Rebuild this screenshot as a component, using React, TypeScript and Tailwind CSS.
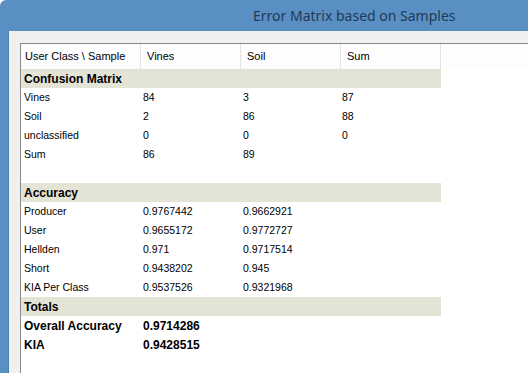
import React from "react";

type Row =
  | { kind: "band"; label: string }
  | { kind: "row"; cells: string[]; bold?: boolean }
  | { kind: "blank" };

const rows: Row[] = [
  { kind: "band", label: "Confusion Matrix" },
  { kind: "row", cells: ["Vines", "84", "3", "87"] },
  { kind: "row", cells: ["Soil", "2", "86", "88"] },
  { kind: "row", cells: ["unclassified", "0", "0", "0"] },
  { kind: "row", cells: ["Sum", "86", "89", ""] },
  { kind: "blank" },
  { kind: "band", label: "Accuracy" },
  { kind: "row", cells: ["Producer", "0.9767442", "0.9662921", ""] },
  { kind: "row", cells: ["User", "0.9655172", "0.9772727", ""] },
  { kind: "row", cells: ["Hellden", "0.971", "0.9717514", ""] },
  { kind: "row", cells: ["Short", "0.9438202", "0.945", ""] },
  { kind: "row", cells: ["KIA Per Class", "0.9537526", "0.9321968", ""] },
  { kind: "band", label: "Totals" },
  { kind: "row", cells: ["Overall Accuracy", "0.9714286", "", ""], bold: true },
  { kind: "row", cells: ["KIA", "0.9428515", "", ""], bold: true },
];

const widths = ["w-[120px]", "w-[100px]", "w-[100px]", "w-[100px]"];

export default function App() {
  return (
    <div
      className="w-[528px] h-[373px] overflow-hidden bg-[#5a8fc3] flex flex-col rounded-tl-[6px]"
      style={{ fontFamily: '"Liberation Sans", Arial, sans-serif' }}
    >
      <div className="h-[31px] shrink-0 flex items-center pl-[253px]">
        <span
          className="text-[14px] text-[#1f3a58] leading-none"
          style={{ fontFamily: '"Noto Sans", "Open Sans", sans-serif' }}
        >
          Error Matrix based on Samples
        </span>
      </div>
      <div className="flex-1 flex pl-[8px] min-h-0">
        <div className="flex-1 bg-[#f0f0f0] pt-[12px] pl-[11px] flex min-w-0 border-l border-[#4f80b2]">
          <div className="flex-1 bg-white border-l border-t border-[#8a8a8a] flex flex-col text-[10.5px] text-black">
            <div className="h-[25px] flex shrink-0 bg-[#fdfdfd] text-[11px]">
              <div className={`${widths[0]} border-r border-[#e3e3e3] flex items-center pl-[4px]`}>
                User Class \ Sample
              </div>
              <div className={`${widths[1]} border-r border-[#e3e3e3] flex items-center pl-[6px]`}>Vines</div>
              <div className={`${widths[2]} border-r border-[#e3e3e3] flex items-center pl-[6px]`}>Soil</div>
              <div className={`${widths[3]} border-r border-[#e3e3e3] flex items-center pl-[6px]`}>Sum</div>
            </div>
            {rows.map((r, i) => {
              if (r.kind === "band") {
                return (
                  <div key={i} className="h-[19px] w-[420px] bg-[#e3e3d6] flex items-center pl-[3px] font-bold text-[12px]">
                    {r.label}
                  </div>
                );
              }
              if (r.kind === "blank") {
                return <div key={i} className="h-[19px]" />;
              }
              return (
                <div key={i} className={`h-[19px] flex items-center ${r.bold ? "font-bold text-[12px]" : ""}`}>
                  <div className={`${widths[0]} pl-[3px]`}>{r.cells[0]}</div>
                  <div className={`${widths[1]} pl-[2px]`}>{r.cells[1]}</div>
                  <div className={`${widths[2]} pl-[2px]`}>{r.cells[2]}</div>
                  <div className={`${widths[3]} pl-[1px]`}>{r.cells[3]}</div>
                </div>
              );
            })}
          </div>
        </div>
      </div>
    </div>
  );
}
